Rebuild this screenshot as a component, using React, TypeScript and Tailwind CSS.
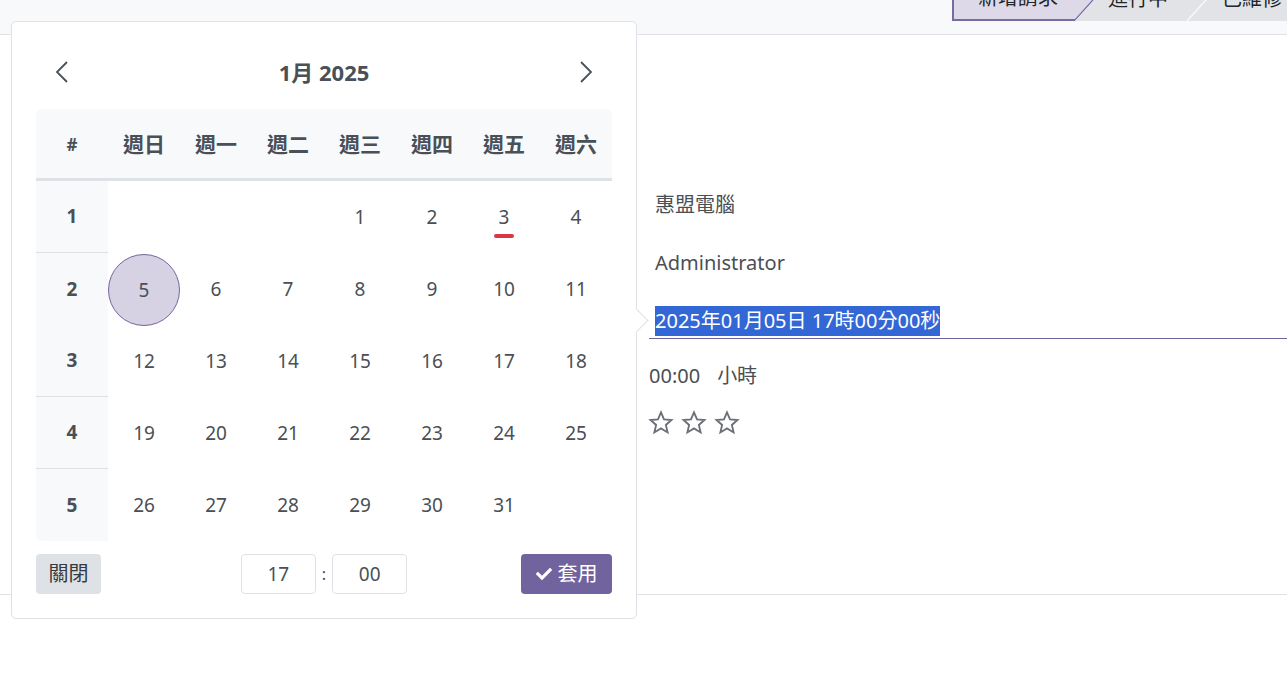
import React from "react";
import { FaCheck } from "react-icons/fa";

const weeks: (number | null)[][] = [
  [null, null, null, 1, 2, 3, 4],
  [5, 6, 7, 8, 9, 10, 11],
  [12, 13, 14, 15, 16, 17, 18],
  [19, 20, 21, 22, 23, 24, 25],
  [26, 27, 28, 29, 30, 31, null],
];
const dayNames = ["週日", "週一", "週二", "週三", "週四", "週五", "週六"];

function Star() {
  return (
    <svg width="26" height="26" viewBox="0 0 24 24">
      <polygon
        points="12,2.2 14.8,8.6 21.7,9.2 16.5,13.8 18.1,20.7 12,17 5.9,20.7 7.5,13.8 2.3,9.2 9.2,8.6"
        fill="none"
        stroke="#6b7078"
        strokeWidth="1.7"
        strokeLinejoin="miter"
      />
    </svg>
  );
}

function Chevron({ dir }: { dir: "l" | "r" }) {
  return (
    <svg width="14" height="22" viewBox="0 0 14 22">
      <polyline
        points={dir === "l" ? "12,1 2,11 12,21" : "2,1 12,11 2,21"}
        fill="none"
        stroke="#495057"
        strokeWidth="1.8"
      />
    </svg>
  );
}

export default function App() {
  return (
    <div
      className="relative w-[1287px] h-[679px] bg-white overflow-hidden text-[#495057]"
      style={{ fontFamily: '"Noto Sans", "Noto Sans CJK TC", sans-serif' }}
    >
      {/* top bar */}
      <div className="h-[35px] bg-[#f8f9fa] border-b border-[#dee2e6] flex justify-start pl-[952px] overflow-hidden">
        <div className="flex shrink-0 h-[41px] mt-[-20px] text-[20px] text-[#212529]">
          <div className="shrink-0 w-[160px] h-[41px] bg-[#7a6aa3] [clip-path:polygon(0_0,100%_0,calc(100%-37px)_100%,0_100%)]">
            <div className="ml-[2px] w-[156px] h-[39px] bg-[#ddd9e8] [clip-path:polygon(0_0,100%_0,calc(100%-35px)_100%,0_100%)] flex items-center pl-[24px] pb-[4px]">
              新增請求
            </div>
          </div>
          <div className="shrink-0 ml-[-37px] w-[148px] h-[41px] bg-[#e1e3e7] [clip-path:polygon(37px_0,100%_0,calc(100%-37px)_100%,0_100%)] flex items-center pl-[33px] pb-[4px]">
            進行中
          </div>
          <div className="shrink-0 ml-[-35px] w-[160px] h-[41px] bg-[#e1e3e7] [clip-path:polygon(37px_0,100%_0,100%_100%,0_100%)] flex items-center pl-[34px] pb-[4px] whitespace-nowrap">
            已維修
          </div>
        </div>
      </div>

      {/* sheet */}
      <div className="h-[560px] border-b border-[#dee2e6] pl-[649px] pt-[155px] text-[20px] text-[#4a4f55]">
        <div className="h-[30px] leading-[30px] pl-[6px]">惠盟電腦</div>
        <div className="h-[30px] leading-[30px] pl-[6px] mt-[28px]">Administrator</div>
        <div className="h-[33px] mt-[28px] border-b border-[#71639e] pl-[6px]">
          <span className="inline-block h-[30px] leading-[30px] bg-[#3367d6] text-white">
            2025年01月05日 17時00分00秒
          </span>
        </div>
        <div className="h-[30px] leading-[30px] mt-[22px] flex gap-[17px]">
          <span>00:00</span>
          <span>小時</span>
        </div>
        <div className="flex gap-[7px] mt-[19px] ml-[-1px]">
          <Star />
          <Star />
          <Star />
        </div>
      </div>

      {/* date picker popover */}
      <div className="absolute left-[11px] top-[21px] w-[626px] h-[598px] bg-white border border-[#dee2e6] rounded-[5px] px-[24px] pt-[30px] z-10">
        {/* arrow */}
        <div className="absolute right-[-9px] top-[290px] w-[17px] h-[17px] bg-white border-t border-r border-[#dee2e6] rotate-45" />

        <div className="flex items-center justify-between h-[40px]">
          <div className="w-[52px] flex justify-center">
            <Chevron dir="l" />
          </div>
          <div className="text-[22px] font-bold text-[#495057]">1月 2025</div>
          <div className="w-[52px] flex justify-center">
            <Chevron dir="r" />
          </div>
        </div>

        <div className="mt-[17px] w-[576px]">
          <div className="grid grid-cols-8 h-[72px] pt-[3px] bg-[#f8f9fa] rounded-t-[6px] border-b-[3px] border-[#dee2e6] text-[21px] font-bold text-[#495057]">
            <div className="flex items-center justify-center text-[17px]">#</div>
            {dayNames.map((d) => (
              <div key={d} className="flex items-center justify-center">
                {d}
              </div>
            ))}
          </div>
          {weeks.map((w, wi) => (
            <div key={wi} className="grid grid-cols-8 h-[72px]">
              <div
                className={
                  "flex items-center justify-center bg-[#f8f9fa] font-bold text-[19px] " +
                  (wi < 4 ? "border-b border-[#dee2e6]" : "rounded-bl-[6px]")
                }
              >
                {wi + 1}
              </div>
              {w.map((d, di) => (
                <div key={di} className="relative flex items-center justify-center text-[19px] text-[#4a4f55]">
                  {d === 5 ? (
                    <div className="w-[72px] h-[72px] mt-[1px] rounded-full bg-[#d6d1e3] border border-[#75659f] flex items-center justify-center">
                      5
                    </div>
                  ) : (
                    d
                  )}
                  {d === 3 && (
                    <div className="absolute left-[26px] top-[53px] w-[20px] h-[4px] rounded-full bg-[#dc3545]" />
                  )}
                </div>
              ))}
            </div>
          ))}
        </div>

        <div className="mt-[13px] grid grid-cols-[1fr_auto_1fr] items-center h-[40px]">
          <div>
            <button className="w-[65px] h-[40px] bg-[#dee2e6] rounded-[4px] text-[20px] text-[#343a40]">關閉</button>
          </div>
          <div className="flex items-center gap-[6px] text-[19px] text-[#495057]">
            <div className="w-[75px] h-[40px] border border-[#dee2e6] rounded-[4px] flex items-center justify-center">17</div>
            <span className="text-[16px]">:</span>
            <div className="w-[75px] h-[40px] border border-[#dee2e6] rounded-[4px] flex items-center justify-center">00</div>
          </div>
          <div className="flex justify-end">
            <button className="w-[91px] h-[40px] bg-[#71639e] rounded-[4px] text-white text-[20px] flex items-center justify-center gap-[6px]">
              <FaCheck size={16} />
              套用
            </button>
          </div>
        </div>
      </div>
    </div>
  );
}
